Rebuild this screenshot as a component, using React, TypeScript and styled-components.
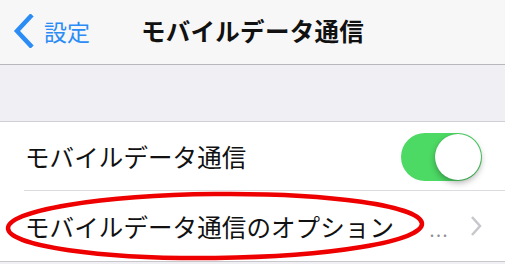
import styled, { createGlobalStyle } from "styled-components";

const GlobalStyle = createGlobalStyle`
  html, body {
    margin: 0;
    padding: 0;
    width: 505px;
    height: 264px;
    overflow: hidden;
    background: #efeff4;
    font-family: "Noto Sans CJK JP", "Noto Sans", sans-serif;
  }
`;

const Screen = styled.div`
  width: 505px;
  height: 264px;
  display: flex;
  flex-direction: column;
  background: #efeff4;
`;

const NavBar = styled.header`
  height: 65px;
  flex-shrink: 0;
  display: grid;
  grid-template-columns: 1fr auto 1fr;
  align-items: center;
  background: #f7f7f7;
  border-bottom: 1px solid #b8b8bc;
  box-sizing: border-box;
`;

const BackButton = styled.div`
  display: flex;
  align-items: center;
  gap: 10px;
  padding-left: 12px;
  color: #2b8cf6;
  font-size: 23px;
  margin-top: -3px;
`;

const Title = styled.h1`
  margin: 0;
  margin-top: -3px;
  font-size: 24.5px;
  font-weight: 700;
  color: #111;
  letter-spacing: 0.3px;
`;

const Gap = styled.div`
  height: 56px;
  flex-shrink: 0;
  border-bottom: 1px solid #d0d0d4;
`;

const List = styled.div`
  background: #fff;
  border-bottom: 1px solid #c8c7cc;
  position: relative;
`;

const Row = styled.div<{ $height: number; $divider?: boolean }>`
  height: ${({ $height }) => $height}px;
  display: flex;
  align-items: center;
  padding: 0 23px 0 25px;
  position: relative;
  &::after {
    content: "";
    display: ${({ $divider }) => ($divider ? "block" : "none")};
    position: absolute;
    left: 24px;
    right: 0;
    bottom: 0;
    height: 1px;
    background: #dcdce0;
  }
`;

const Label = styled.span`
  flex: 1;
  font-size: 24.5px;
  color: #111;
  letter-spacing: 0.1px;
`;

const Toggle = styled.div`
  width: 81px;
  height: 48px;
  border-radius: 24px;
  background: #4cd964;
  position: relative;
  margin-top: 1px;
`;

const Knob = styled.div`
  position: absolute;
  right: 1px;
  top: 1px;
  width: 46px;
  height: 46px;
  border-radius: 50%;
  background: #fff;
  box-shadow: 0 3px 6px rgba(0, 0, 0, 0.3), 0 0 1px rgba(0, 0, 0, 0.2);
`;

const Detail = styled.span`
  color: #8e8e93;
  font-size: 18px;
  letter-spacing: 1.5px;
  margin-right: 21px;
  margin-top: 6px;
`;

const Annotation = styled.svg`
  position: absolute;
  left: 0;
  top: 0;
  pointer-events: none;
`;

export default function App() {
  return (
    <>
      <GlobalStyle />
      <Screen>
        <NavBar>
          <BackButton>
            <svg width="22" height="34" viewBox="0 0 22 34">
              <path
                d="M18.5 2.5 L5 17 L18.5 31.5"
                fill="none"
                stroke="#2b8cf6"
                strokeWidth="4.5"
                strokeLinecap="square"
              />
            </svg>
            <span>設定</span>
          </BackButton>
          <Title>モバイルデータ通信</Title>
          <div />
        </NavBar>
        <Gap />
        <List>
          <Row $height={69} $divider>
            <Label>モバイルデータ通信</Label>
            <Toggle>
              <Knob />
            </Toggle>
          </Row>
          <Row $height={70}>
            <Label>モバイルデータ通信のオプション</Label>
            <Detail>...</Detail>
            <svg width="12" height="22" viewBox="0 0 12 22">
              <path
                d="M2 2 L10 11 L2 20"
                fill="none"
                stroke="#c7c7cc"
                strokeWidth="2.5"
              />
            </svg>
          </Row>
          <Annotation width="505" height="140" viewBox="0 0 505 140">
            <ellipse
              cx="215"
              cy="104"
              rx="207"
              ry="32"
              fill="none"
              stroke="#ee0000"
              strokeWidth="4.5"
              transform="rotate(-0.6 215 104)"
            />
          </Annotation>
        </List>
      </Screen>
    </>
  );
}
